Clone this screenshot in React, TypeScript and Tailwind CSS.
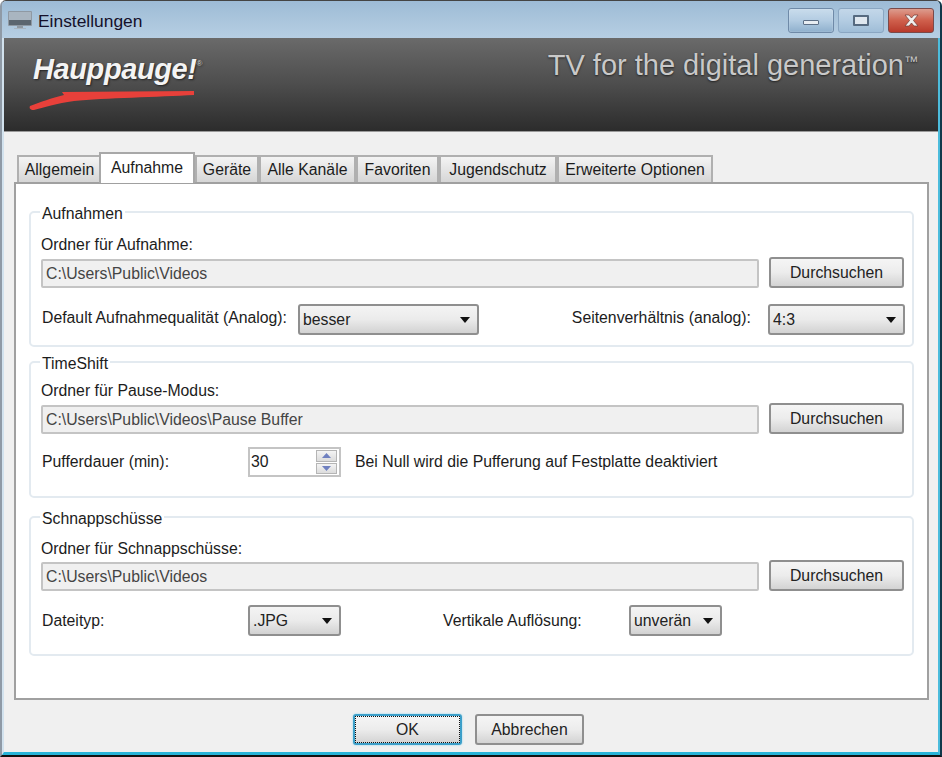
import React from "react";

const FONT = "[font-family:'Liberation_Sans',Arial,sans-serif]";

function Select({ value, w }: { value: string; w: string }) {
  return (
    <div className={`${w} h-[31px] shrink-0 flex items-center justify-between pl-[3px] pr-[7px] rounded-[3px] border-2 border-[#8f8f8f] bg-gradient-to-b from-[#f4f4f4] via-[#ebebeb] to-[#d2d2d2] text-[#222]`}>
      <span>{value}</span>
      <svg width="10" height="6" viewBox="0 0 10 6"><path d="M0 0h10L5 6z" fill="#111" /></svg>
    </div>
  );
}

function Button({ children, w, focus }: { children: React.ReactNode; w: string; focus?: boolean }) {
  return (
    <div className={`${w} h-[31px] shrink-0 rounded-[3px] border-2 ${focus ? "border-[#3c9fc9] shadow-[0_0_2px_#7fd0ee]" : "border-[#8f8f8f]"} bg-gradient-to-b from-[#f5f5f5] via-[#ececec] to-[#d3d3d3] flex items-center justify-center text-[#222]`}>
      {focus ? (
        <div className="w-full h-full border border-dotted border-[#111] flex items-center justify-center">{children}</div>
      ) : children}
    </div>
  );
}

function PathRow({ path, mt }: { path: string; mt: string }) {
  return (
    <div className={`flex items-start -ml-[1px] ${mt}`}>
      <div className="w-[718px] h-[29px] mt-[2px] border-2 border-[#c4c4c4] rounded-[2px] bg-[#f0f0f0] pl-[3px] flex items-center text-[#444]">{path}</div>
      <div className="ml-[10px]"><Button w="w-[135px]">Durchsuchen</Button></div>
    </div>
  );
}

function Group({ title, h, children }: { title: string; h: string; children: React.ReactNode }) {
  return (
    <fieldset className={`${h} border-2 border-[#e3eaf0] rounded-[5px] pl-[11px] pr-[7px]`}>
      <legend className="-ml-[2px] px-[2px] pt-[2px] h-[20px] leading-[20px] -mb-[1px]">{title}</legend>
      {children}
    </fieldset>
  );
}

const tabs: [string, string][] = [
  ["Allgemein", "w-[85px]"],
  ["Aufnahme", "w-[96px]"],
  ["Geräte", "w-[64px]"],
  ["Alle Kanäle", "w-[97px]"],
  ["Favoriten", "w-[83px]"],
  ["Jugendschutz", "w-[118px]"],
  ["Erweiterte Optionen", "w-[156px]"],
];

export default function App() {
  return (
    <div className={`${FONT} w-[942px] h-[757px] overflow-hidden flex flex-col text-[15.8px] leading-[20px] text-[#1c1c1c] rounded-t-[6px] border-t border-t-[#444] border-l-2 border-l-[#8f9aa6] border-r-2 border-r-[#10384a] border-b-2 border-b-[#111] bg-[#bcd2e4]`}>
      {/* Title bar */}
      <div className="h-[37px] shrink-0 flex items-center pl-[6px] pr-[6px] bg-gradient-to-b from-[#9dbbd6] via-[#aac5dc] to-[#b6cee3]">
        <svg width="24" height="20" viewBox="0 0 24 20" className="shrink-0">
          <rect x="0" y="1" width="24" height="15" rx="1" fill="#8f99a3" />
          <rect x="1" y="2" width="22" height="8" fill="#a9b5c0" />
          <rect x="1" y="10" width="22" height="5" fill="#5b6670" />
          <rect x="9" y="16" width="6" height="2" fill="#8f99a3" />
          <rect x="6" y="18" width="12" height="1" fill="#a9b5c0" />
        </svg>
        <span className="ml-[6px] mt-[2px] text-[17.400px] text-[#15102a]">Einstellungen</span>
        <div className="ml-auto flex items-start gap-[4px] mt-[1px]">
          <div className="w-[46px] h-[25px] rounded-[3px] border border-[#6f8aa8] bg-gradient-to-b from-[#c9dcec] via-[#b3cce2] to-[#8fb0cd] flex items-center justify-center shadow-[inset_0_0_1px_#fff]">
            <div className="w-[16px] h-[5px] mt-[5px] rounded-[1px] bg-[#e8edf2] border border-[#5d6f86]" />
          </div>
          <div className="w-[46px] h-[25px] rounded-[3px] border border-[#8aa6c2] bg-gradient-to-b from-[#c3d7e9] via-[#b3cce2] to-[#9fbdd7] flex items-center justify-center">
            <div className="w-[16px] h-[11px] rounded-[1px] border-2 border-[#566a80] bg-[#dfe7ef]" />
          </div>
          <div className="w-[46px] h-[25px] rounded-[3px] border border-[#7a4a4a] bg-gradient-to-b from-[#dc9c8e] via-[#cf5f4c] to-[#b8392b] flex items-center justify-center">
            <svg width="17" height="13" viewBox="0 0 17 13"><path d="M2 1h4l2.500 3L11 1h4l-4.500 5.500L15 12h-4L8.500 9 6 12H2l4.500-5.500z" fill="#f1efee" stroke="#6d3a33" strokeWidth="0.7" /></svg>
          </div>
        </div>
      </div>

      {/* Window body */}
      <div className="flex-1 min-h-0 flex flex-col bg-[#f0f0f0] border-l-2 border-l-[#d2e2ee] border-r-2 border-r-[#4cbcdc] border-b-[3px] border-b-[#27b4d8]">
        {/* Banner */}
        <div className="h-[94px] shrink-0 flex justify-between bg-gradient-to-b from-[#6a6a6a] via-[#4d4d4d] to-[#2c2c2c] border-b border-[#9a9a9a]">
          <div className="ml-[25px] mt-[14px] relative h-[60px] w-[180px]">
            <div className="flex items-start text-[29px] leading-[34px] font-bold italic text-[#f4f4f4] -tracking-[0.4px] [text-shadow:1px_1px_2px_#222]">
              <span className="ml-[4px]">Hauppauge!</span>
              <span className="-mt-[5px] text-[8px] font-normal not-italic text-[#ccc]">®</span>
            </div>
            <svg width="170" height="22" viewBox="0 0 170 22" className="absolute left-0 top-[38px]">
              <path d="M33 2 L165 1 L165 5 C 130 7 75 8 45 11 C 28 13 14 18 5 20 C 1 20 0 18 1 16 C 12 12 22 8 35 5z" fill="#e8403a" />
            </svg>
          </div>
          <div className="mt-[10px] mr-[20px] flex items-start text-[29px] leading-[34px] text-[#c9c9c9] [text-shadow:0_1px_2px_#222] whitespace-nowrap">
            <span>TV for the digital generation</span>
            <span className="text-[14px] leading-[26px]">™</span>
          </div>
        </div>

        {/* Tabs */}
        <div className="flex items-end h-[50px] shrink-0 pl-[13px]">
          {tabs.map(([t, w], i) =>
            i === 1 ? (
              <div key={t} className={`${w} h-[31px] -ml-[3px] -mb-[1px] relative z-10 bg-white border-2 border-b-0 border-[#a8a8a8] flex items-center justify-center pb-[2px]`}>{t}</div>
            ) : (
              <div key={t} className={`${w} h-[27px] bg-gradient-to-b from-[#f4f4f4] to-[#d6d6d6] border-2 border-b-0 border-[#b0b0b0] flex items-center justify-center`}>{t}</div>
            )
          )}
        </div>

        {/* Tab panel */}
        <div className="ml-[10px] mr-[9px] h-[518px] shrink-0 bg-white border-2 border-[#a0a0a0] px-[13px] pt-[18px] flex flex-col gap-[5px]">
          <Group title="Aufnahmen" h="h-[145px]">
            <div className="h-[20px] mt-[14px] -ml-[1px]">Ordner für Aufnahme:</div>
            <PathRow path="C:\Users\Public\Videos" mt="mt-[2px]" />
            <div className="flex items-center mt-[16px]">
              <span className="w-[256px] mb-[3px]">Default Aufnahmequalität (Analog):</span>
              <Select value="besser" w="w-[181px]" />
              <span className="ml-auto mr-[17px] mb-[3px]">Seitenverhältnis (analog):</span>
              <Select value="4:3" w="w-[137px]" />
            </div>
          </Group>
          <Group title="TimeShift" h="h-[146px]">
            <div className="h-[20px] mt-[10px] -ml-[1px]">Ordner für Pause-Modus:</div>
            <PathRow path="C:\Users\Public\Videos\Pause Buffer" mt="mt-[2px]" />
            <div className="flex items-center mt-[13px]">
              <span className="w-[206px]">Pufferdauer (min):</span>
              <div className="w-[93px] h-[30px] border-2 border-[#c4c4c4] bg-white flex items-center pl-[1px] pr-[2px]">
                <span>30</span>
                <div className="ml-auto w-[21px] h-[24px] flex flex-col gap-[1px]">
                  {["M0 5 L4.500 0 L9 5z", "M0 0 L9 0 L4.500 5z"].map((d) => (
                    <div key={d} className="flex-1 bg-gradient-to-b from-[#f4f4f4] to-[#dcdcdc] border border-[#b5b5b5] flex items-center justify-center">
                      <svg width="9" height="5" viewBox="0 0 9 5"><path d={d} fill="#6f80c0" /></svg>
                    </div>
                  ))}
                </div>
              </div>
              <span className="ml-[14px]">Bei Null wird die Pufferung auf Festplatte deaktiviert</span>
            </div>
          </Group>
          <div className="mt-[4px]">
            <Group title="Schnappschüsse" h="h-[149px]">
              <div className="h-[20px] mt-[13px] -ml-[1px]">Ordner für Schnappschüsse:</div>
              <PathRow path="C:\Users\Public\Videos" mt="mt-[1px]" />
              <div className="flex items-center mt-[14px]">
                <span className="w-[206px]">Dateityp:</span>
                <Select value=".JPG" w="w-[93px]" />
                <span className="ml-[102px] w-[186px]">Vertikale Auflösung:</span>
                <Select value="unverän" w="w-[93px]" />
              </div>
            </Group>
          </div>
        </div>

        {/* Footer */}
        <div className="flex-1 flex items-start pt-[14px] pl-[349px] gap-[13px]">
          <Button w="w-[109px]" focus>OK</Button>
          <Button w="w-[109px]">Abbrechen</Button>
        </div>
      </div>
    </div>
  );
}
